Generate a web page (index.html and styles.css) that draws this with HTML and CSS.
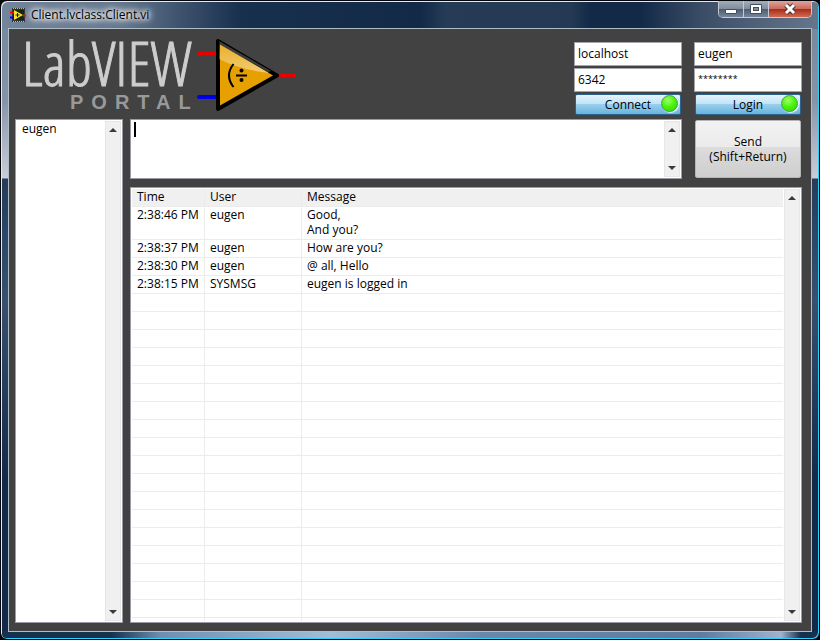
FILE: index.html
```html
<!DOCTYPE html>
<html lang="en">
<head>
<meta charset="utf-8">
<title>Client.lvclass:Client.vi</title>
<link rel="stylesheet" href="styles.css">
</head>
<body>
<div class="window">
  <header class="titlebar">
    <svg class="app-icon" width="16" height="14" viewBox="0 0 16 14" aria-hidden="true">
      <rect x="2" y="0" width="13" height="14" fill="#333"/>
      <path d="M3 .5H15M3 13.5H15" stroke="#bbb" stroke-dasharray="1 1"/>
      <rect x="3" y="2" width="11" height="10" fill="#0b2a10"/>
      <path d="M0 4.500H4M13 7.500H16" stroke="#f00" stroke-width="2"/>
      <path d="M0 9.500H4" stroke="#00f" stroke-width="2"/>
      <path d="M4 2V12L13 7Z" fill="#ffe02a"/>
      <path d="M5.500 7H9.500M7.500 5V9" stroke="#222"/>
    </svg>
    <h1 class="title">Client.lvclass:Client.vi</h1>
    <div class="window-buttons">
      <button type="button" class="win-btn" aria-label="Minimize"><svg width="12" height="14" viewBox="0 0 12 14"><rect x=".5" y="7.500" width="11" height="4" rx=".5" fill="#fff" stroke="#454d5c"/></svg></button>
      <button type="button" class="win-btn" aria-label="Maximize"><svg width="12" height="14" viewBox="0 0 12 14"><path d="M.5 2.500H11.500V11.500H.5Z" fill="#fff" stroke="#454d5c"/><rect x="3.500" y="5.500" width="5" height="3" fill="#8490a0" stroke="#454d5c"/></svg></button>
      <button type="button" class="win-btn close" aria-label="Close"><svg width="14" height="14" viewBox="0 0 14 14"><path d="M3 3L11 11M11 3L3 11" stroke="#4c3038" stroke-width="5"/><path d="M3 3L11 11M11 3L3 11" stroke="#fff" stroke-width="3"/></svg></button>
    </div>
  </header>
  <main class="panel">
    <div class="top">
      <div class="brand">
        <div class="wordmark">
          <span class="word">LabVIEW</span>
          <span class="sub">PORTAL</span>
        </div>
        <svg class="logo" width="100" height="74" viewBox="0 0 100 74" aria-hidden="true">
          <defs>
            <linearGradient id="gloss" x1="0" y1="0" x2="0" y2="1"><stop offset="0" stop-color="#fff" stop-opacity=".15"/><stop offset="1" stop-color="#fff" stop-opacity=".45"/></linearGradient>
          </defs>
          <path d="M3 15.500H22M82 37.500H98" stroke="#e60000" stroke-width="4" stroke-linecap="round"/>
          <path d="M3 59H22" stroke="#0000e6" stroke-width="4" stroke-linecap="round"/>
          <path d="M22 3V71L81 37.500Z" fill="#e6a000" stroke="#000" stroke-width="4" stroke-linejoin="round"/>
          <path d="M23 3L75 33L72 34L24 6Z" fill="#3c3c3c"/>
          <path d="M23 5L73 35Q45 32 23 21Z" fill="url(#gloss)"/>
          <path d="M37.500 26Q28.500 37.500 37.500 49" fill="none" stroke="#000" stroke-width="2"/>
          <path d="M40 37.500H51" stroke="#000" stroke-width="2"/>
          <circle cx="45.500" cy="32.500" r="2" fill="#000"/><circle cx="45.500" cy="42" r="2" fill="#000"/>
        </svg>
      </div>
      <form class="fields">
        <input type="text" aria-label="Host" value="localhost">
        <input type="text" aria-label="Port" value="6342">
        <button type="button" class="action">Connect<span class="led"></span></button>
      </form>
      <form class="fields">
        <input type="text" aria-label="User" value="eugen">
        <input type="text" class="secret" aria-label="Password" value="********">
        <button type="button" class="action">Login<span class="led"></span></button>
      </form>
    </div>
    <div class="workspace">
      <aside class="box users">
        <ul><li>eugen</li></ul>
        <div class="scroll"><svg width="8" height="4" viewBox="0 0 8 4"><path d="M0 4L4 0L8 4Z"/></svg><svg width="8" height="4" viewBox="0 0 8 4"><path d="M0 0L4 4L8 0Z"/></svg></div>
      </aside>
      <div class="chat">
        <div class="compose">
          <div class="box editor">
            <textarea aria-label="Message"></textarea>
            <span class="caret"></span>
            <div class="scroll"><svg width="8" height="4" viewBox="0 0 8 4"><path d="M0 4L4 0L8 4Z"/></svg><svg width="8" height="4" viewBox="0 0 8 4"><path d="M0 0L4 4L8 0Z"/></svg></div>
          </div>
          <button type="button" class="send">Send<br>(Shift+Return)</button>
        </div>
        <div class="box log">
          <div class="log-view">
            <table>
              <colgroup><col class="c-time"><col class="c-user"><col></colgroup>
              <thead><tr><th>Time</th><th>User</th><th>Message</th></tr></thead>
              <tbody>
                <tr><td>2:38:46 PM</td><td>eugen</td><td>Good,<br>And you?</td></tr>
                <tr><td>2:38:37 PM</td><td>eugen</td><td>How are you?</td></tr>
                <tr><td>2:38:30 PM</td><td>eugen</td><td>@ all, Hello</td></tr>
                <tr><td>2:38:15 PM</td><td>SYSMSG</td><td>eugen is logged in</td></tr>
                <tr><td></td><td></td><td></td></tr><tr><td></td><td></td><td></td></tr>
                <tr><td></td><td></td><td></td></tr><tr><td></td><td></td><td></td></tr>
                <tr><td></td><td></td><td></td></tr><tr><td></td><td></td><td></td></tr>
                <tr><td></td><td></td><td></td></tr><tr><td></td><td></td><td></td></tr>
                <tr><td></td><td></td><td></td></tr><tr><td></td><td></td><td></td></tr>
                <tr><td></td><td></td><td></td></tr><tr><td></td><td></td><td></td></tr>
                <tr><td></td><td></td><td></td></tr><tr><td></td><td></td><td></td></tr>
                <tr><td></td><td></td><td></td></tr><tr><td></td><td></td><td></td></tr>
                <tr><td></td><td></td><td></td></tr><tr><td></td><td></td><td></td></tr>
                <tr><td></td><td></td><td></td></tr>
              </tbody>
            </table>
          </div>
          <div class="scroll"><svg width="8" height="4" viewBox="0 0 8 4"><path d="M0 4L4 0L8 4Z"/></svg><svg width="8" height="4" viewBox="0 0 8 4"><path d="M0 0L4 4L8 0Z"/></svg></div>
        </div>
      </div>
    </div>
  </main>
</div>
</body>
</html>
```
FILE: styles.css
```css
* { box-sizing: border-box; }

body {
  margin: 0;
  background: #05060c;
  color: #000;
  font: 12px/15px "Open Sans", "Noto Sans", sans-serif;
}

button, input, textarea { font: inherit; color: inherit; margin: 0; }

.window {
  display: flex;
  flex-direction: column;
  height: 100vh;
  padding: 0 7px 7px;
  border: 1px solid #05060c;
  border-radius: 7px;
  box-shadow: inset 1px 1px #e4eaf0, inset -1px -1px #2cd0f8;
  background:
    linear-gradient(90deg, #16304e 0, #16304e 110px, #6f8fb2 160px, #a2bdd8 330px, #6a87ac 480px, #5f7ba0 700px, #a0b2d0 780px, #16304e 800px) bottom / 100% 8px no-repeat,
    linear-gradient(90deg, #73859a 0, #64778e 120px, #3d526c 180px, #17304e 240px, #122a48 420px, #263c56 445px, #243a54 570px, #122a48 590px, #122a48 640px, #3b4d66 700px, #66778c 100%) top / 100% 28px no-repeat,
    linear-gradient(#728499, #8794a8 100px, #c9ced8 177px, #263c58 178px, #2a4668 230px, #38506e 300px, #12294a 480px);
}

.titlebar {
  display: flex;
  align-items: center;
  height: 27px;
  padding-left: 2px;
}

.title {
  flex: 1;
  margin: 0 0 0 5px;
  font-size: 12px;
  font-weight: 400;
  text-shadow: 0 0 4px #fff, 0 0 6px #fff, 0 0 8px #fff, 0 0 10px #fff;
}

.window-buttons {
  display: flex;
  align-self: flex-start;
  border: 1px solid #c3ccd6;
  border-top: 0;
  border-radius: 0 0 5px 5px;
  overflow: hidden;
}

.win-btn {
  display: flex;
  align-items: center;
  justify-content: center;
  width: 25px;
  height: 16px;
  padding: 0;
  border: 0;
  border-right: 1px solid #c3ccd6;
  background: linear-gradient(#a3aebb, #7f8b9b 50%, #4c5b6e 50%, #75869b);
}

.win-btn.close {
  width: 42px;
  border-right: 0;
  background: linear-gradient(#e0a59b, #c9695a 50%, #a82a17 50%, #cf6a50);
}

.panel {
  display: flex;
  flex: 1;
  flex-direction: column;
  min-height: 0;
  padding: 9px 9px 8px 6px;
  border: 1px solid #aebdc8;
  background: #424242;
}

.top {
  display: flex;
  gap: 12px;
  height: 81px;
}

.brand {
  display: flex;
  flex: 1;
  align-items: flex-start;
  padding-left: 7px;
}

.wordmark {
  display: flex;
  flex-direction: column;
  width: 174px;
}

.word {
  color: #cdcdcd;
  font: 300 60px/50px "Open Sans Condensed Light", "Open Sans Condensed", "Liberation Sans Narrow", sans-serif;
  -webkit-text-stroke: 1px #cdcdcd;
}

.sub {
  padding-left: 48px;
  color: #999;
  font: bold 20px/28px "Liberation Sans", sans-serif;
  letter-spacing: 8px;
}

.fields {
  display: flex;
  flex-direction: column;
  gap: 2px;
  width: 108px;
  padding-top: 4px;
}

.fields input {
  width: 100%;
  height: 24px;
  padding: 0 3px 1px;
  border: 1px solid #a5a5ad;
  background: #fff;
}

.fields input.secret {
  padding-bottom: 4px;
  font-size: 9px;
}

.action {
  position: relative;
  height: 21px;
  margin: 0 1px;
  padding: 0;
  border: 1px solid #2c628b;
  border-radius: 2px;
  background: linear-gradient(#e3f3fc, #bfe2f6 50%, #98cfee 50%, #68b3dc);
}

.led {
  position: absolute;
  top: 0;
  right: 2px;
  width: 17px;
  height: 17px;
  border: 1px solid #4d9c68;
  border-radius: 50%;
  background: radial-gradient(circle at 40% 30%, #a0ff70, #4cf50a 45%, #32d000);
  box-shadow: 1px 1px 1px #e8f8ff;
}

.workspace {
  display: flex;
  flex: 1;
  gap: 7px;
  min-height: 0;
}

.box {
  display: flex;
  border: 1px solid #9b9ba5;
  background: #fff;
}

.scroll {
  display: flex;
  flex: none;
  flex-direction: column;
  align-items: center;
  justify-content: space-between;
  width: 16px;
  margin: 1px;
  padding: 6px 0;
  border: 1px solid #e6e6e6;
  background: #f0f0f0;
  fill: #3a3a3a;
}

.users { width: 108px; }

.users ul {
  flex: 1;
  margin: 0;
  padding: 1px 6px;
  list-style: none;
}

.chat {
  display: flex;
  flex: 1;
  flex-direction: column;
  gap: 8px;
  min-width: 0;
}

.compose {
  display: flex;
  gap: 13px;
  height: 60px;
}

.editor {
  position: relative;
  flex: 1;
}

.editor textarea {
  flex: 1;
  padding: 2px 4px;
  border: 0;
  outline: 0;
  overflow: hidden;
  resize: none;
  background: none;
}

.caret {
  position: absolute;
  top: 2px;
  left: 3px;
  width: 2px;
  height: 15px;
  background: #000;
}

.send {
  width: 106px;
  margin: 1px 1px 1px 0;
  padding: 0;
  border: 1px solid #b5b5b5;
  border-radius: 2px;
  background: linear-gradient(#f2f2f2, #ebebeb 47%, #dcdcdc 47%, #cecece);
}

.log {
  flex: 1;
  min-height: 0;
}

.log-view {
  flex: 1;
  margin: 1px 0 1px 1px;
  overflow: hidden;
}

table {
  width: 100%;
  border-collapse: separate;
  border-spacing: 0;
  table-layout: fixed;
}

.c-time { width: 73px; }
.c-user { width: 97px; }

th, td {
  height: 18px;
  padding: 0 5px 2px;
  border-bottom: 1px solid #ececec;
  border-right: 1px solid #ececec;
  font-weight: 400;
  text-align: left;
  vertical-align: top;
}

th { background: #f0f0f0; }
th:last-child, td:last-child { border-right: 0; }
```
